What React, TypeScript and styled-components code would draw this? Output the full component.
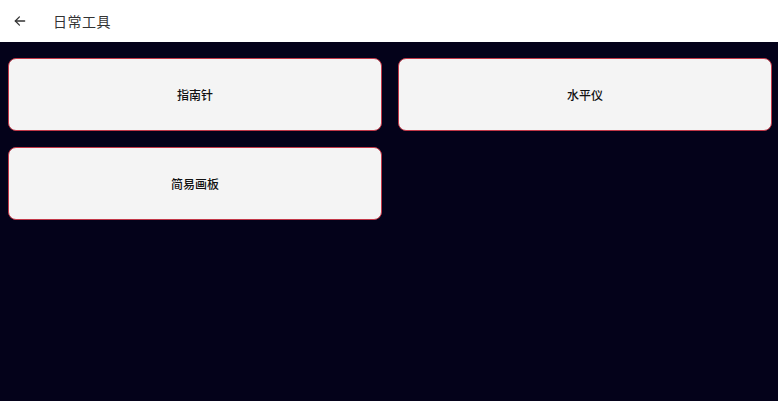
import React from 'react';
import styled, { createGlobalStyle } from 'styled-components';

const GlobalStyle = createGlobalStyle`
	html, body {
		margin: 0;
		padding: 0;
		background: #04021a;
		font-family: 'Noto Sans CJK SC', 'Noto Sans', sans-serif;
	}
`;

const tools = ['指南针', '水平仪', '简易画板'];

const App: React.FC = () => {
	return (
		<>
			<GlobalStyle />
			<Page>
				<Header>
					<BackButton aria-label="返回">
						<svg width="14" height="14" viewBox="0 0 24 24" fill="none" stroke="#333" strokeWidth="2.2" strokeLinecap="round" strokeLinejoin="round">
							<path d="M20 12H4" />
							<path d="M11 5l-7 7 7 7" />
						</svg>
					</BackButton>
					<Title>日常工具</Title>
				</Header>
				<Grid>
					{tools.map((name) => (
						<ToolCard key={name}>{name}</ToolCard>
					))}
				</Grid>
			</Page>
		</>
	);
};

export default App;

const Page = styled.div`
	width: 778px;
	height: 401px;
	background: #04021a;
	overflow: hidden;
`;

const Header = styled.div`
	height: 42px;
	background: #ffffff;
	display: flex;
	align-items: center;
	padding: 0 0 0 12px;
	box-sizing: border-box;
`;

const BackButton = styled.div`
	width: 16px;
	height: 16px;
	display: flex;
	align-items: center;
	justify-content: center;
	margin-right: 25px;
`;

const Title = styled.span`
	font-size: 14px;
	color: #333;
	letter-spacing: 0.5px;
`;

const Grid = styled.div`
	display: grid;
	grid-template-columns: 1fr 1fr;
	column-gap: 16px;
	row-gap: 16px;
	padding: 16px 6px 0 8px;
`;

const ToolCard = styled.div`
	height: 73px;
	box-sizing: border-box;
	background: #f4f4f4;
	border: 1px solid #c23848;
	border-radius: 8px;
	display: flex;
	align-items: center;
	justify-content: center;
	font-size: 12px;
	font-weight: 500;
	color: #111;
`;
